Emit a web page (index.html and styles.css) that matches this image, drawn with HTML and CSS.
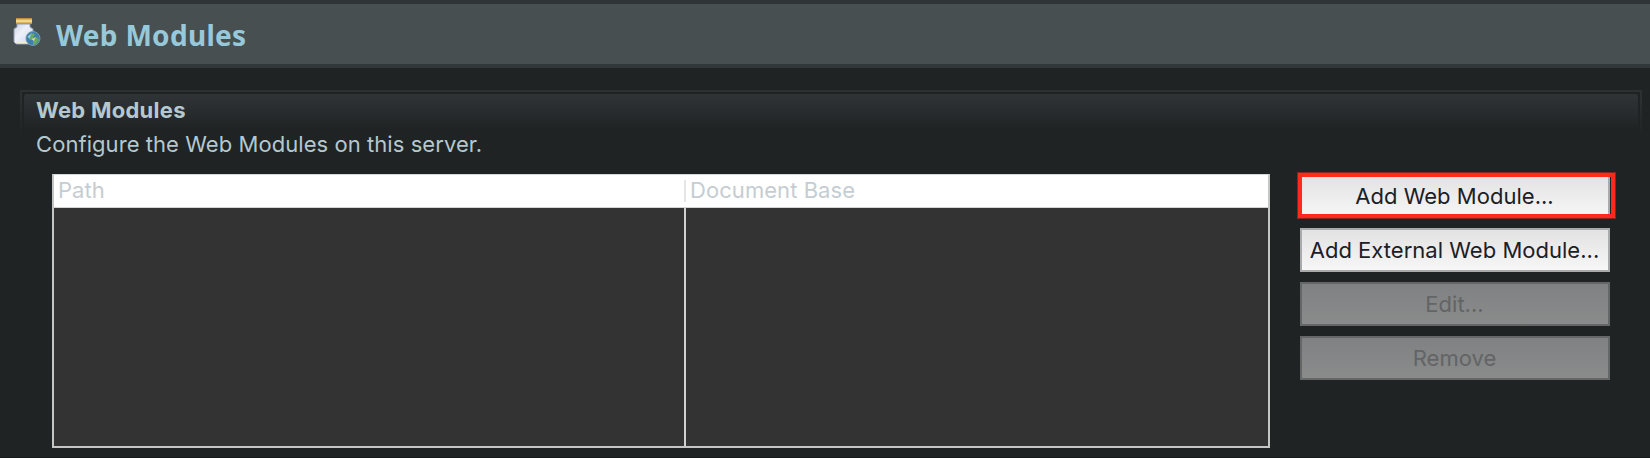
FILE: index.html
```html
<!DOCTYPE html>
<html lang="en">
<head>
<meta charset="utf-8">
<title>Web Modules</title>
<link rel="stylesheet" href="styles.css">
</head>
<body>
<header class="header">
  <svg class="icon" width="28" height="30" viewBox="0 0 28 30">
    <defs>
      <linearGradient id="jar" x1="0" y1="0" x2="1" y2="1"><stop offset="0" stop-color="#c9d0e4"/><stop offset=".4" stop-color="#eef1fa"/><stop offset="1" stop-color="#c9d6ee"/></linearGradient>
      <linearGradient id="lid" x1="0" y1="0" x2="0" y2="1"><stop offset="0" stop-color="#ad8226"/><stop offset=".5" stop-color="#fbe7a4"/><stop offset="1" stop-color="#b8892a"/></linearGradient>
    </defs>
    <path d="M4 6h13v3l3 2v14l-2 1H3l-2-2V11l3-2z" fill="url(#jar)" stroke="#8f9cb4" stroke-width="1"/>
    <path d="M4 24.500h11" stroke="#f3eccb" stroke-width="2"/>
    <rect x="3" y="0" width="16" height="6" fill="url(#lid)"/>
    <circle cx="20" cy="20.500" r="7" fill="#3f7fab" stroke="#7799ad" stroke-width="1"/>
    <path d="M15 20l3-5 4 1-2 4-3 2zM20 23l4-4 2 3-3 4-3 1z" fill="#66a868"/>
    <path d="M14.500 18.500l4-3-2 5z" fill="#8fd0e8"/>
    <path d="M18 21l5-2-2 4z" fill="#d4d878"/>
  </svg>
  <h1 class="title">Web Modules</h1>
</header>
<main class="section">
  <div class="section-frame"><div class="section-bar"><h2 class="section-title">Web Modules</h2></div></div>
  <p class="description">Configure the Web Modules on this server.</p>
  <div class="content">
    <div class="table">
      <div class="table-head">
        <div class="th path">Path</div>
        <div class="th base">Document Base</div>
      </div>
      <div class="table-body"><div class="col"></div></div>
    </div>
    <div class="actions">
      <button class="button highlighted">Add Web Module...</button>
      <button class="button">Add External Web Module...</button>
      <button class="button" disabled>Edit...</button>
      <button class="button" disabled>Remove</button>
    </div>
  </div>
</main>
</body>
</html>
```
FILE: styles.css
```css
* { box-sizing: border-box; }
body {
  margin: 0;
  height: 458px;
  overflow: hidden;
  background: #1f2324;
  border-bottom: 1px solid #15191a;
  color: #b5c8cf;
  font: 22px/28px Inter, "Liberation Sans", sans-serif;
}
.header {
  display: flex;
  height: 68px;
  padding-left: 13px;
  background: #474f50;
  border-top: 4px solid #2f3437;
  border-bottom: 4px solid #32373a;
}
.icon { margin-top: 14px; }
.title {
  margin: 12px 0 0 15px;
  color: #97c9da;
  font: bold 28px/38px "Noto Sans", sans-serif;
  letter-spacing: 0.3px;
}
.section { padding: 22px 8px 0 20px; }
.section-frame {
  height: 44px;
  padding: 2px;
  border: 2px solid;
  border-bottom: 0;
  border-image: linear-gradient(#2b3032, #2b3032 20%, #1f2324) 2;
}
.section-bar {
  height: 36px;
  padding: 2px 0 0 12px;
  border-radius: 3px 3px 0 0;
  background: linear-gradient(#2f3437, #1f2324);
}
.section-title {
  margin: 0;
  font-size: 22px;
  line-height: 28px;
  font-weight: 700;
  letter-spacing: 0.26px;
}
.description {
  height: 44px;
  margin: -4px 0 0 16px;
  letter-spacing: 0.06px;
}
.content { display: flex; padding-left: 32px; }
.table {
  display: flex;
  flex-direction: column;
  width: 1218px;
  height: 274px;
  border: 2px solid #c5c5c5;
  border-top: 1px solid #d5d8d8;
  background: #333;
}
.table-head {
  display: flex;
  height: 33px;
  padding-top: 5px;
  background: #fff;
  border-bottom: 1px solid #d2d4d3;
  color: #c5cdd2;
  letter-spacing: 0.06px;
}
.th {
  height: 22px;
  padding-left: 4px;
  line-height: 20px;
  white-space: nowrap;
}
.path { width: 632px; border-right: 2px solid #e3e5e6; }
.table-body { display: flex; flex: 1; }
.col { width: 632px; border-right: 2px solid #d0d0d0; }
.actions {
  display: grid;
  grid-auto-rows: 44px;
  gap: 10px;
  width: 310px;
  margin-left: 30px;
}
.button {
  display: flex;
  justify-content: center;
  align-items: center;
  padding: 0 1px 0 0;
  border: 2px solid #a9aaab;
  border-radius: 0;
  background: linear-gradient(#e2e2e2, #f6f6f6);
  color: #1b2025;
  font: inherit;
  letter-spacing: 0.02px;
  white-space: nowrap;
}
.button:disabled {
  border-color: #656767;
  background: linear-gradient(#808182, #8a8c8c);
  color: #626465;
}
.highlighted { position: relative; }
.highlighted::after {
  content: "";
  position: absolute;
  inset: -4px -8px -3px -5px;
  border: 5px solid #ff2a1c;
  outline: 1px solid #88251e;
  outline-offset: -1px;
}
```
